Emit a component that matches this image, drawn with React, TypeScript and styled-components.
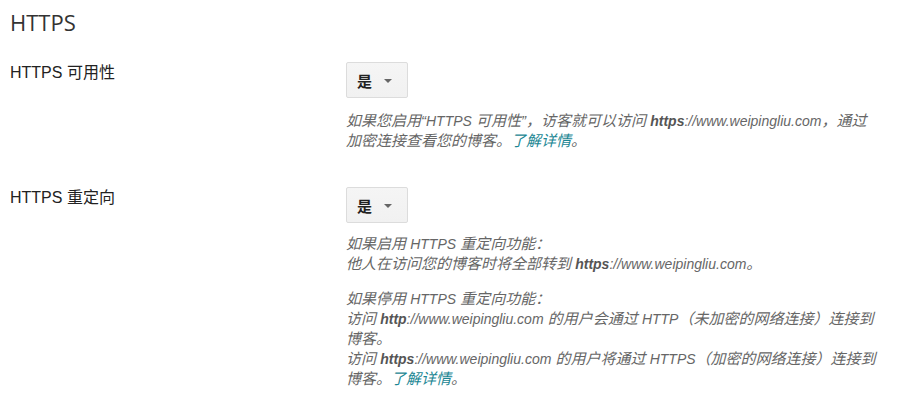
import React from "react";
import styled, { createGlobalStyle } from "styled-components";

const Global = createGlobalStyle`
  html, body { margin: 0; padding: 0; background: #fff; }
  body { font-family: "Liberation Sans", Arial, "Noto Sans CJK SC", sans-serif; }
`;

const Page = styled.div`
  padding: 6px 10px 0 10px;
  width: 915px;
  box-sizing: border-box;
`;

const Title = styled.h1`
  margin: 0 0 24px 0;
  font-family: "Open Sans", "Noto Sans CJK SC", sans-serif;
  font-weight: 400;
  font-size: 22px;
  line-height: 32px;
  color: #333;
`;

const Row = styled.div<{ $gap?: number }>`
  display: grid;
  grid-template-columns: 336px 1fr;
  margin-bottom: ${(p) => p.$gap ?? 0}px;
`;

const Label = styled.div`
  font-size: 16px;
  line-height: 20px;
  color: #222;
  padding-top: 1px;
  font-family: "Liberation Sans", Arial, "Noto Sans CJK SC", sans-serif;
`;

const Control = styled.div`
  display: flex;
  flex-direction: column;
  align-items: flex-start;
`;

const Select = styled.button`
  width: 62px;
  height: 36px;
  box-sizing: border-box;
  display: flex;
  align-items: center;
  padding: 0 0 0 10px;
  gap: 12px;
  border: 1px solid #dcdcdc;
  border-radius: 2px;
  background: linear-gradient(#f5f5f5, #f1f1f1);
  font-family: "Liberation Sans", Arial, "Noto Sans CJK SC", sans-serif;
  font-size: 15px;
  font-weight: 700;
  color: #222;
  cursor: pointer;
`;

const Arrow = styled.span`
  width: 0;
  height: 0;
  border-left: 4px solid transparent;
  border-right: 4px solid transparent;
  border-top: 4px solid #666;
  margin-top: 2px;
`;

const Help = styled.div<{ $top: number }>`
  margin-top: ${(p) => p.$top}px;
  font-size: 15px;
  line-height: 20px;
  font-style: italic;
  color: #666;
  max-width: 534px;
`;

/* Latin runs are set a pixel smaller than the CJK text around them */
const L = styled.span`
  font-size: 14px;
`;

const Para = styled.p`
  margin: 0 0 15px 0;
  &:last-child { margin-bottom: 0; }
`;

const B = styled.b`
  color: #555;
  font-weight: 700;
`;

const Link = styled.a`
  color: #1a8693;
  text-decoration: none;
`;

const Url = ({ scheme }: { scheme: string }) => (
  <L>
    <B>{scheme}</B>://www.weipingliu.com
  </L>
);

export default function App() {
  return (
    <>
      <Global />
      <Page>
        <Title>HTTPS</Title>
        <Row $gap={36}>
          <Label>HTTPS 可用性</Label>
          <Control>
            <Select>
              是<Arrow />
            </Select>
            <Help $top={13}>
              如果您启用“<L>HTTPS</L> 可用性”，访客就可以访问 <Url scheme="https" />，通过加密连接查看您的博客。
              <Link href="#">了解详情</Link>。
            </Help>
          </Control>
        </Row>
        <Row>
          <Label>HTTPS 重定向</Label>
          <Control>
            <Select>
              是<Arrow />
            </Select>
            <Help $top={11}>
              <Para>
                如果启用 <L>HTTPS</L> 重定向功能：
                <br />
                他人在访问您的博客时将全部转到 <Url scheme="https" />。
              </Para>
              <Para>
                如果停用 <L>HTTPS</L> 重定向功能：
                <br />
                访问 <Url scheme="http" /> 的用户会通过 <L>HTTP</L>（未加密的网络连接）连接到博客。
                <br />
                访问 <Url scheme="https" /> 的用户将通过 <L>HTTPS</L>（加密的网络连接）连接到博客。
                <Link href="#">了解详情</Link>。
              </Para>
            </Help>
          </Control>
        </Row>
      </Page>
    </>
  );
}
